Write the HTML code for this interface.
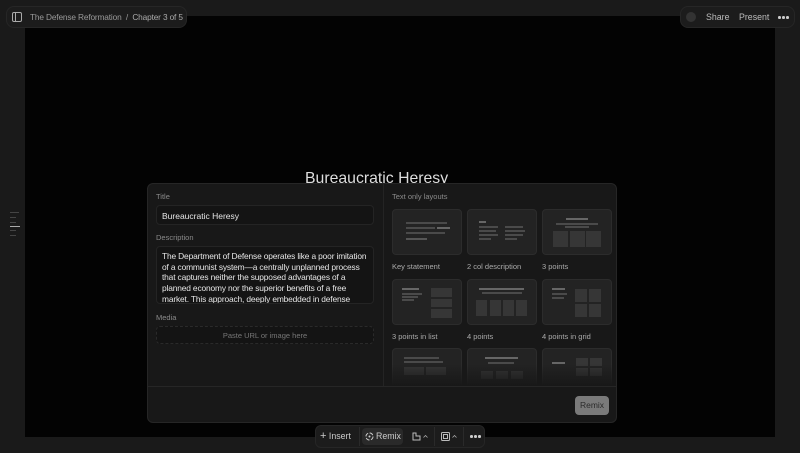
<!DOCTYPE html>
<html><head><meta charset="utf-8"><style>
*{margin:0;padding:0;box-sizing:border-box}
body{width:800px;height:453px;background:#1a1a1a;font-family:"Liberation Sans",sans-serif;position:relative;overflow:hidden;color:#ddd}
.abs{position:absolute}
.canvas{left:25px;top:16px;width:750px;height:421px;background:#030303}
.pill{background:#1c1c1c;border:1px solid #262626;border-radius:8px}
.modal{left:147px;top:183px;width:470px;height:240px;background:#181818;border:1px solid #262626;border-radius:6px;overflow:hidden}
.lbl{font-size:7.5px;color:#8a8a8a;position:absolute}
.inp{position:absolute;left:8px;width:218px;background:#141414;border:1px solid #242424;border-radius:4px;font-size:8.5px;color:#e6e6e6}
.card{position:absolute;width:70px;height:46px;background:#232323;border:1px solid #2c2c2c;border-radius:4px}
.cap{position:absolute;font-size:7.5px;color:#aaa}
.b{position:absolute;background:#4a4a4a;height:2px}
.bx{position:absolute;background:#363636}
.dots{position:absolute;display:flex;gap:1.5px}
.dots i{width:2.5px;height:2.5px;border-radius:50%;background:#ccc;display:block}
</style></head><body>
<div class="abs canvas"></div>
<div class="abs pill" style="left:6px;top:6px;width:181px;height:22px"></div>
<svg class="abs" style="left:12px;top:12px" width="10" height="10" viewBox="0 0 10 10"><rect x="0.5" y="0.5" width="9" height="9" rx="1.5" fill="none" stroke="#aaa"/><line x1="3.5" y1="0.5" x2="3.5" y2="9.5" stroke="#aaa"/></svg>
<div class="abs" style="left:30px;top:12px;font-size:8.3px;color:#999;letter-spacing:-0.15px">The Defense Reformation&nbsp;&nbsp;/&nbsp;&nbsp;<span style="color:#aaa">Chapter 3 of 5</span></div>
<div class="abs pill" style="left:680px;top:6px;width:115px;height:22px"></div>
<div class="abs" style="left:686px;top:12px;width:10px;height:10px;border-radius:50%;background:#333"></div>
<div class="abs" style="left:706px;top:12px;font-size:8.8px;color:#bbb">Share</div>
<div class="abs" style="left:739px;top:12px;font-size:8.8px;color:#bbb">Present</div>
<div class="dots" style="left:778px;top:16px"><i></i><i></i><i></i></div>
<div class="abs" style="left:10px;top:212px;width:9px;height:1px;background:#444"></div>
<div class="abs" style="left:10px;top:217px;width:6px;height:1px;background:#444"></div>
<div class="abs" style="left:10px;top:222px;width:6px;height:1px;background:#444"></div>
<div class="abs" style="left:10px;top:226px;width:10px;height:1px;background:#aaa"></div>
<div class="abs" style="left:10px;top:230px;width:6px;height:1px;background:#444"></div>
<div class="abs" style="left:10px;top:235px;width:6px;height:1px;background:#444"></div>
<div class="abs" style="left:305px;top:170px;font-size:15.8px;color:#ddd">Bureaucratic Heresy</div>
<div class="abs modal">
 <div class="abs" style="left:235px;top:0;width:1px;height:203px;background:#242424"></div>
 <div class="abs" style="left:0;top:202px;width:470px;height:1px;background:#262626"></div>
 <div class="lbl" style="left:8px;top:8px">Title</div>
 <div class="inp" style="top:21px;height:20px;padding:5px 5px">Bureaucratic Heresy</div>
 <div class="lbl" style="left:8px;top:49px">Description</div>
 <div class="inp" style="top:62px;height:58px;padding:4px 5px;line-height:10.7px;overflow:hidden;letter-spacing:-0.15px;font-size:8.4px">The Department of Defense operates like a poor imitation of a communist system—a centrally unplanned process that captures neither the supposed advantages of a planned economy nor the superior benefits of a free market. This approach, deeply embedded in defense</div>
 <div class="lbl" style="left:8px;top:129px">Media</div>
 <div class="inp" style="top:142px;height:18px;border:1px dashed #2a2a2a;text-align:center;font-size:7.5px;color:#777;padding-top:4px">Paste URL or image here</div>
 <div class="lbl" style="left:244px;top:8px">Text only layouts</div>
 <div class="abs" style="left:236px;top:0;width:234px;height:202px;overflow:hidden">
 <div class="abs" style="left:-236px;top:0;width:470px;height:240px">
 <div class="card" style="left:244px;top:25px"><div class="b" style="left:13px;top:12px;width:41px"></div><div class="b" style="left:13px;top:17px;width:29px"></div><div class="b" style="left:44px;top:17px;width:13px;background:#666"></div><div class="b" style="left:13px;top:22px;width:39px"></div><div class="b" style="left:13px;top:28px;width:21px;background:#555"></div></div>
 <div class="cap" style="left:244px;top:78px">Key statement</div>
 <div class="card" style="left:319px;top:25px"><div class="b" style="left:11px;top:11px;width:7px;background:#666"></div><div class="b" style="left:11px;top:16px;width:19px"></div><div class="b" style="left:11px;top:20px;width:17px"></div><div class="b" style="left:11px;top:24px;width:19px"></div><div class="b" style="left:11px;top:28px;width:12px"></div><div class="b" style="left:37px;top:16px;width:18px"></div><div class="b" style="left:37px;top:20px;width:20px"></div><div class="b" style="left:37px;top:24px;width:18px"></div><div class="b" style="left:37px;top:28px;width:12px"></div></div>
 <div class="cap" style="left:319px;top:78px">2 col description</div>
 <div class="card" style="left:394px;top:25px"><div class="b" style="left:23px;top:8px;width:22px;background:#666"></div><div class="b" style="left:13px;top:13px;width:42px"></div><div class="b" style="left:22px;top:16px;width:24px"></div><div class="bx" style="left:10px;top:21px;width:15px;height:16px"></div><div class="bx" style="left:27px;top:21px;width:15px;height:16px"></div><div class="bx" style="left:43px;top:21px;width:15px;height:16px"></div></div>
 <div class="cap" style="left:394px;top:78px">3 points</div>
 <div class="card" style="left:244px;top:95px"><div class="b" style="left:9px;top:8px;width:17px;background:#666"></div><div class="b" style="left:9px;top:13px;width:20px"></div><div class="b" style="left:9px;top:16px;width:16px"></div><div class="b" style="left:9px;top:19px;width:12px"></div><div class="bx" style="left:38px;top:8px;width:21px;height:9px"></div><div class="bx" style="left:38px;top:19px;width:21px;height:8px"></div><div class="bx" style="left:38px;top:29px;width:21px;height:9px"></div></div>
 <div class="cap" style="left:244px;top:148px">3 points in list</div>
 <div class="card" style="left:319px;top:95px"><div class="b" style="left:11px;top:8px;width:45px;background:#666"></div><div class="b" style="left:14px;top:12px;width:40px"></div><div class="bx" style="left:8px;top:20px;width:11px;height:16px"></div><div class="bx" style="left:22px;top:20px;width:11px;height:16px"></div><div class="bx" style="left:35px;top:20px;width:11px;height:16px"></div><div class="bx" style="left:48px;top:20px;width:11px;height:16px"></div></div>
 <div class="cap" style="left:319px;top:148px">4 points</div>
 <div class="card" style="left:394px;top:95px"><div class="b" style="left:9px;top:8px;width:13px;background:#666"></div><div class="b" style="left:9px;top:13px;width:15px"></div><div class="b" style="left:9px;top:17px;width:12px"></div><div class="bx" style="left:32px;top:9px;width:12px;height:13px"></div><div class="bx" style="left:46px;top:9px;width:12px;height:13px"></div><div class="bx" style="left:32px;top:24px;width:12px;height:13px"></div><div class="bx" style="left:46px;top:24px;width:12px;height:13px"></div></div>
 <div class="cap" style="left:394px;top:148px">4 points in grid</div>
 <div class="card" style="left:244px;top:164px"><div class="b" style="left:11px;top:8px;width:35px"></div><div class="b" style="left:11px;top:12px;width:39px"></div><div class="bx" style="left:11px;top:18px;width:20px;height:8px"></div><div class="bx" style="left:33px;top:18px;width:20px;height:8px"></div></div>
 <div class="card" style="left:319px;top:164px"><div class="b" style="left:17px;top:8px;width:33px;background:#666"></div><div class="b" style="left:20px;top:13px;width:26px"></div><div class="bx" style="left:13px;top:22px;width:12px;height:8px"></div><div class="bx" style="left:28px;top:22px;width:12px;height:8px"></div><div class="bx" style="left:43px;top:22px;width:12px;height:8px"></div></div>
 <div class="card" style="left:394px;top:164px"><div class="b" style="left:9px;top:13px;width:13px;background:#666"></div><div class="bx" style="left:33px;top:9px;width:12px;height:8px"></div><div class="bx" style="left:47px;top:9px;width:12px;height:8px"></div><div class="bx" style="left:33px;top:19px;width:12px;height:8px"></div><div class="bx" style="left:47px;top:19px;width:12px;height:8px"></div></div>
 <div class="abs" style="left:236px;top:180px;width:234px;height:22px;background:linear-gradient(rgba(24,24,24,0),#181818)"></div>
 </div></div>
 <div class="abs" style="left:427px;top:212px;width:34px;height:19px;background:#7a7a7a;border-radius:4px;font-size:8.5px;color:#2a2a2a;text-align:center;line-height:19px">Remix</div>
</div>
<div class="abs pill" style="left:315px;top:425px;width:170px;height:23px;border-radius:6px"></div>
<div class="abs" style="left:320px;top:431px;font-size:8.8px;color:#ccc"><span style="font-size:11px;line-height:8px">+</span> Insert</div>
<div class="abs" style="left:359px;top:427px;width:1px;height:19px;background:#2a2a2a"></div>
<div class="abs" style="left:362px;top:428px;width:41px;height:17px;background:#2a2a2a;border-radius:4px"></div>
<svg class="abs" style="left:365px;top:432px" width="9" height="9" viewBox="0 0 9 9"><circle cx="4.5" cy="4.5" r="3.5" fill="none" stroke="#ccc" stroke-dasharray="4 1.5"/><circle cx="4.5" cy="4.5" r="1" fill="#ccc"/></svg>
<div class="abs" style="left:376px;top:431px;font-size:8.8px;color:#ccc">Remix</div>
<svg class="abs" style="left:412px;top:432px" width="9" height="9" viewBox="0 0 9 9"><path d="M1 8V1h3v3h4v4z" fill="none" stroke="#bbb"/></svg>
<svg class="abs" style="left:423px;top:435px" width="5" height="3" viewBox="0 0 5 3"><path d="M0.5 2.5L2.5 0.5L4.5 2.5" fill="none" stroke="#aaa" stroke-width="0.8"/></svg>
<div class="abs" style="left:434px;top:427px;width:1px;height:19px;background:#2a2a2a"></div>
<svg class="abs" style="left:441px;top:432px" width="9" height="9" viewBox="0 0 9 9"><rect x="0.5" y="0.5" width="8" height="8" rx="1" fill="none" stroke="#bbb"/><rect x="2.5" y="2.5" width="4" height="4" fill="none" stroke="#bbb"/></svg>
<svg class="abs" style="left:452px;top:435px" width="5" height="3" viewBox="0 0 5 3"><path d="M0.5 2.5L2.5 0.5L4.5 2.5" fill="none" stroke="#aaa" stroke-width="0.8"/></svg>
<div class="abs" style="left:463px;top:427px;width:1px;height:19px;background:#2a2a2a"></div>
<div class="dots" style="left:470px;top:435px"><i></i><i></i><i></i></div>
</body></html>
